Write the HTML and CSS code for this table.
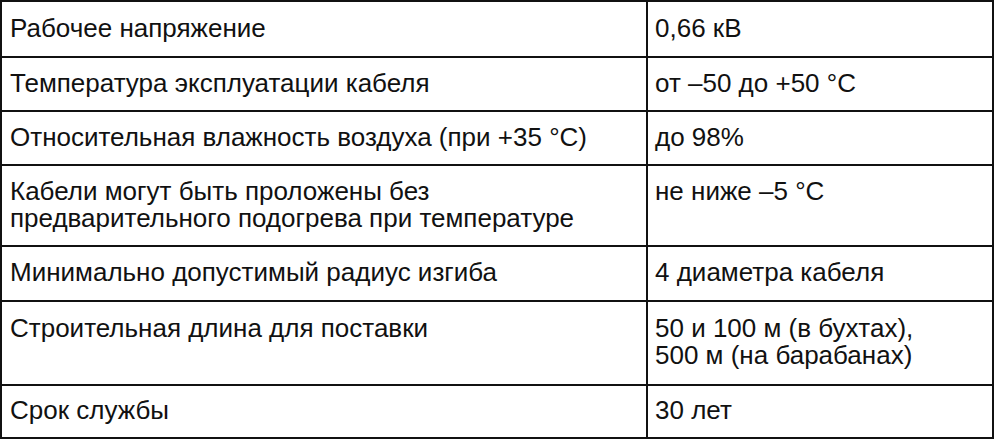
FILE: index.html
```html
<!DOCTYPE html>
<html lang="ru">
<head>
<meta charset="utf-8">
<title>Характеристики кабеля</title>
<link rel="stylesheet" href="styles.css">
</head>
<body>
<table class="spec">
  <tr class="r1"><td class="k">Рабочее напряжение</td><td class="v">0,66 кВ</td></tr>
  <tr><td class="k">Температура эксплуатации кабеля</td><td class="v">от –50 до +50 °С</td></tr>
  <tr><td class="k">Относительная влажность воздуха (при +35 °С)</td><td class="v">до 98%</td></tr>
  <tr class="r4"><td class="k">Кабели могут быть проложены без<br>предварительного подогрева при температуре</td><td class="v">не ниже –5 °С</td></tr>
  <tr class="r5"><td class="k">Минимально допустимый радиус изгиба</td><td class="v">4 диаметра кабеля</td></tr>
  <tr class="r6"><td class="k">Строительная длина для поставки</td><td class="v">50 и 100 м (в бухтах),<br>500 м (на барабанах)</td></tr>
  <tr class="r7"><td class="k">Срок службы</td><td class="v">30 лет</td></tr>
</table>
</body>
</html>
```
FILE: styles.css
```css
html, body {
  margin: 0;
  padding: 0;
  background: #ffffff;
}
.spec {
  border-collapse: collapse;
  table-layout: fixed;
  width: 994px;
  font-family: "Liberation Sans", Arial, sans-serif;
  font-size: 26px;
  line-height: 27px;
  color: #111111;
}
.spec td {
  border: 2px solid #111111;
  vertical-align: top;
  padding: 12px 6px 13px 8px;
}
.spec .k {
  width: 630px;
}
.spec .v {
  padding-left: 7px;
}
.spec .r1 td {
  padding-top: 13px;
  padding-bottom: 14px;
}
.spec .r5 td {
  padding-bottom: 14px;
}
.spec .r6 td {
  padding-top: 13px;
  padding-bottom: 15px;
}
.spec .r7 td {
  padding-top: 11px;
  padding-bottom: 13px;
}
```
